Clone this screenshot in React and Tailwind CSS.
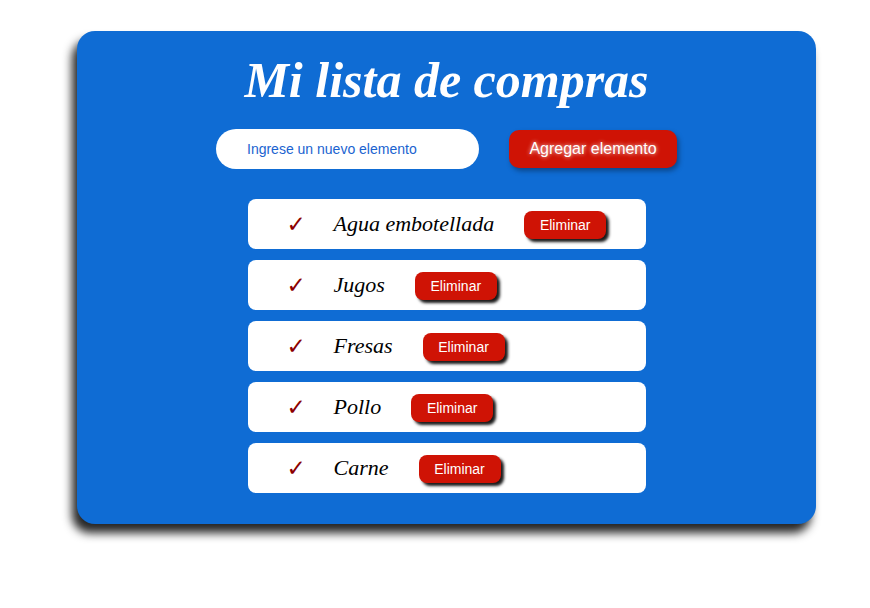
export default function App() {
  const items = ["Agua embotellada", "Jugos", "Fresas", "Pollo", "Carne"];
  return (
    <div className="w-[870px] h-[608px] bg-white pt-[31px]">
      <div className="ml-[77px] w-[739px] h-[493px] rounded-[18px] bg-[#0f6cd4] shadow-[-5px_9px_10px_rgba(0,0,0,0.85)] flex flex-col items-center">
        <h1 className="mt-[26px] text-white italic font-bold text-[50px] leading-[56px] -mb-[4px] [font-family:'Liberation_Serif',serif] h-[52px] flex items-end">
          <span className="relative top-[-1px]">Mi lista de compras</span>
        </h1>
        <div className="mt-[24px] flex items-center gap-[30px]">
          <input
            className="w-[263px] h-[40px] rounded-full bg-white pl-[31px] text-[14px] text-[#1565c0] placeholder:text-[#1a63d0] outline-none [font-family:'Liberation_Sans',Arial,sans-serif]"
            placeholder="Ingrese un nuevo elemento"
          />
          <button className="w-[168px] h-[38px] rounded-[10px] bg-[#cf1305] text-white text-[16px] [font-family:'Liberation_Sans',Arial,sans-serif] [text-shadow:0_0_4px_rgba(255,255,255,0.9)] shadow-[2px_3px_5px_rgba(0,0,0,0.35)]">
            Agregar elemento
          </button>
        </div>
        <ul className="mt-[30px] flex flex-col gap-[11px]">
          {items.map((t) => (
            <li key={t} className="w-[398px] h-[50px] bg-white rounded-[8px] flex items-center pl-[39px]">
              <span className="text-[#8b0000] text-[23px] font-bold w-[47px] [font-family:'DejaVu_Sans',sans-serif] leading-none">✓</span>
              <span className="italic text-[22px] text-black [font-family:'Liberation_Serif',serif] relative -top-[1px]">{t}</span>
              <button className="ml-[30px] w-[82px] h-[28px] rounded-[8px] bg-[#cf1305] text-white text-[14px] [font-family:'Liberation_Sans',Arial,sans-serif] shadow-[3px_3px_3px_rgba(0,0,0,0.9)] relative top-[1px]">
                Eliminar
              </button>
            </li>
          ))}
        </ul>
      </div>
    </div>
  );
}
